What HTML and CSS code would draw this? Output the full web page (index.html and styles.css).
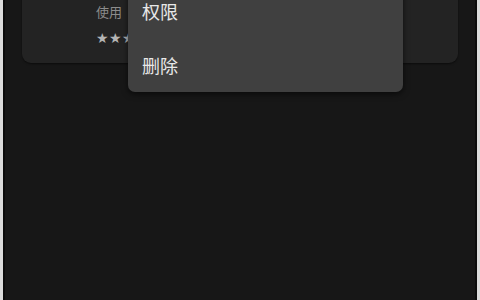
FILE: index.html
```html
<!DOCTYPE html>
<html lang="zh">
<head>
<meta charset="utf-8">
<link rel="stylesheet" href="styles.css">
</head>
<body>
<div class="screen">
  <div class="card">
    <div class="meta">使用</div>
    <div class="stars">★★★</div>
  </div>
  <div class="menu">
    <div class="item">权限</div>
    <div class="item">删除</div>
  </div>
</div>
</body>
</html>
```
FILE: styles.css
```css
html, body {
  margin: 0;
  padding: 0;
  height: 300px;
  overflow: hidden;
  background: #dcdcdc;
  font-family: "Noto Sans CJK SC", "Noto Sans", sans-serif;
}
.screen {
  position: relative;
  height: 300px;
  margin: 0 3px;
  background: #171717;
  border-left: 2px solid #0c0c0c;
  border-right: 2px solid #0c0c0c;
  overflow: hidden;
}
.card {
  margin: -20px 17px 0;
  height: 83px;
  box-sizing: border-box;
  background: #232323;
  border-radius: 9px;
  padding: 22px 0 0 74px;
  box-shadow: 0 1px 2px rgba(0,0,0,0.5);
}
.meta {
  font-size: 13px;
  line-height: 20px;
  color: #8c8c8c;
}
.stars {
  margin-top: 7px;
  font-size: 14px;
  line-height: 18px;
  letter-spacing: 0.5px;
  color: #b4b4b4;
  font-family: "DejaVu Sans", sans-serif;
}
.menu {
  position: absolute;
  left: 123px;
  top: -44px;
  width: 275px;
  padding-top: 28px;
  background: #404040;
  border-radius: 7px;
  box-shadow: 0 2px 6px rgba(0,0,0,0.6);
}
.item {
  height: 54px;
  display: flex;
  align-items: center;
  padding-left: 14px;
  font-size: 18px;
  color: #e8e8e8;
}
```
